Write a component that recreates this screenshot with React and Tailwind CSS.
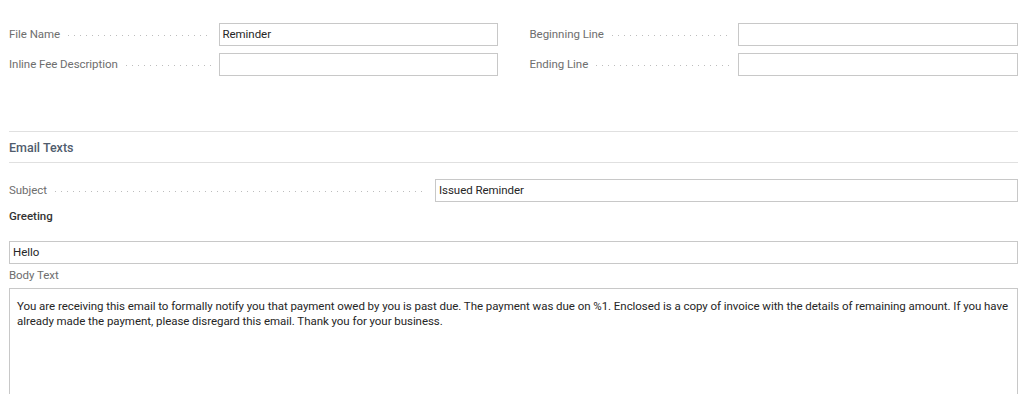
export default function App() {
  const font = { fontFamily: 'Roboto, "Open Sans", sans-serif' };
  const Dots = () => (
    <div className="flex-1 mx-2 h-px mt-[2px] bg-[linear-gradient(to_right,#bdbdbd_1px,transparent_1px)] bg-[length:6px_1px] bg-repeat-x" />
  );
  const Field = ({ label, value, inputW = "w-[279px]" }) => (
    <div className="flex items-center h-[23px]">
      <span className="text-[11.5px] tracking-[-0.05px] text-[#6e6e6e] whitespace-nowrap">{label}</span>
      <Dots />
      <div className={`${inputW} h-[23px] border border-[#c8c8c8] px-[3px] flex items-center text-[11.5px] tracking-[-0.05px] text-[#262626]`}>
        {value}
      </div>
    </div>
  );
  return (
    <div className="w-[1024px] h-[394px] overflow-hidden bg-white pl-[9px] pr-[6px] pt-[23px]" style={font}>
      <div className="grid grid-cols-2 gap-x-[32px]">
        <div className="flex flex-col gap-[7px]">
          <Field label="File Name" value="Reminder" />
          <Field label="Inline Fee Description" value="" />
        </div>
        <div className="flex flex-col gap-[7px]">
          <Field label="Beginning Line" value="" inputW="w-[280px]" />
          <Field label="Ending Line" value="" inputW="w-[280px]" />
        </div>
      </div>
      <div className="mt-[55px] border-t border-[#e0e0e0] h-[32px] pt-[2px] flex items-center border-b">
        <span className="text-[12.5px] font-medium text-[#505c6d]">Email Texts</span>
      </div>
      <div className="mt-[16px]">
        <Field label="Subject" value="Issued Reminder" inputW="w-[583px]" />
      </div>
      <div className="h-[30px] flex items-center text-[11.5px] font-medium text-[#333333]">Greeting</div>
      <div className="mt-[9px] h-[23px] border border-[#c8c8c8] px-[3px] flex items-center text-[11.5px] tracking-[-0.05px] text-[#262626]">Hello</div>
      <div className="h-[24px] flex items-center text-[11.5px] tracking-[-0.05px] text-[#6e6e6e]">Body Text</div>
      <div className="h-[200px] border border-[#c8c8c8] px-[7px] pt-[10px] text-[11.5px] tracking-[-0.05px] leading-[15px] text-[#262626]">
        You are receiving this email to formally notify you that payment owed by you is past due. The payment was due on %1. Enclosed is a copy of invoice with the details of remaining amount. If you have already made the payment, please disregard this email. Thank you for your business.
      </div>
    </div>
  );
}
